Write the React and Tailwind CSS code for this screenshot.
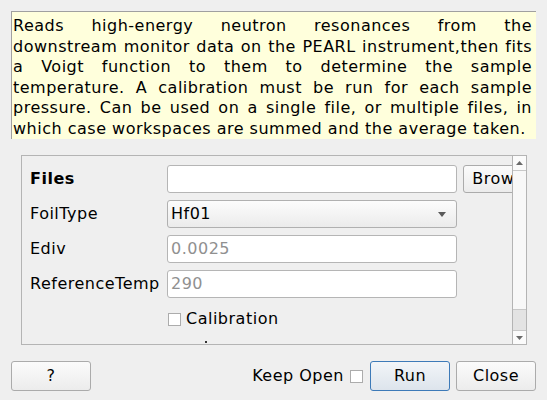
export default function App() {
  const input = "h-[28px] w-[290px] shrink-0 bg-white border border-[#b5b5b5] rounded-[3px] flex items-center pl-[3px]";
  return (
    <div className="w-[547px] h-[400px] bg-[#efefef] flex flex-col font-['DejaVu_Sans',sans-serif] text-[16px] tracking-[0.5px] text-black overflow-hidden">
      <div className="mx-[11px] mt-[11px] h-[128px] shrink-0 bg-[#ffffdc] border-t border-l border-[#a0a0a0] pl-[1px] pr-[4px] pt-[4px] text-justify leading-[20.6px]">
        Reads high-energy neutron resonances from the downstream monitor data on the PEARL instrument,then fits a Voigt function to them to determine the sample temperature. A calibration must be run for each sample pressure. Can be used on a single file, or multiple files, in which case workspaces are summed and the average taken.
      </div>

      <div className="ml-[21px] mt-[16px] w-[506px] h-[190px] shrink-0 border border-[#b4b4b4] flex">
        <div className="flex-1 overflow-hidden pl-[8px] pt-[9px] flex flex-col gap-[7px]">
          <div className="flex items-center h-[28px] shrink-0">
            <div className="w-[137px] shrink-0 font-bold">Files</div>
            <div className={input}></div>
            <div className="ml-[6px] h-[28px] w-[80px] shrink-0 border border-[#ababab] rounded-[3px] bg-gradient-to-b from-[#fbfbfb] to-[#ececec] flex items-center justify-center">
              Browse
            </div>
          </div>
          <div className="flex items-center h-[28px] shrink-0">
            <div className="w-[137px] shrink-0">FoilType</div>
            <div className="h-[28px] w-[290px] shrink-0 border border-[#b0b0b0] rounded-[3px] bg-gradient-to-b from-[#fcfcfc] to-[#ebebeb] flex items-center pl-[3px] pr-[10px]">
              <span className="flex-1">Hf01</span>
              <svg width="8" height="5" viewBox="0 0 8 5"><path d="M0 0H8L4 5Z" fill="#5a5a5a" /></svg>
            </div>
          </div>
          <div className="flex items-center h-[28px] shrink-0">
            <div className="w-[137px] shrink-0">Ediv</div>
            <div className={input}><span className="text-[#909090]">0.0025</span></div>
          </div>
          <div className="flex items-center h-[28px] shrink-0">
            <div className="w-[137px] shrink-0">ReferenceTemp</div>
            <div className={input}><span className="text-[#909090]">290</span></div>
          </div>
          <div className="flex items-center h-[28px] shrink-0">
            <div className="w-[138px] shrink-0"></div>
            <div className="w-[13px] h-[13px] shrink-0 bg-white border border-[#acacac]"></div>
            <span className="ml-[5px]">Calibration</span>
          </div>
          <div className="flex h-[28px] shrink-0">
            <div className="ml-[175px] mt-[1px] w-[2px] h-[2px] bg-[#333]"></div>
          </div>
        </div>
        <div className="w-[14px] shrink-0 border-l border-[#b4b4b4] bg-[#f8f8f8] flex flex-col">
          <div className="h-[15px] border-b border-[#c8c8c8] bg-[#fbfbfb] flex items-center justify-center">
            <svg width="7" height="4" viewBox="0 0 7 4"><path d="M3.5 0L7 4H0Z" fill="#6a6a6a" /></svg>
          </div>
          <div className="flex-1"></div>
          <div className="h-[22px] bg-[#e3e3e3] border-y border-[#c8c8c8]"></div>
          <div className="h-[13px] bg-[#fbfbfb] flex items-center justify-center">
            <svg width="7" height="4" viewBox="0 0 7 4"><path d="M0 0H7L3.5 4Z" fill="#6a6a6a" /></svg>
          </div>
        </div>
      </div>

      <div className="mt-[16px] px-[11px] flex items-center h-[30px] shrink-0">
        <div className="h-[30px] w-[80px] border border-[#ababab] rounded-[3px] bg-gradient-to-b from-[#fbfbfb] to-[#ececec] flex items-center justify-center">?</div>
        <div className="flex-1"></div>
        <span>Keep Open</span>
        <div className="ml-[6px] w-[13px] h-[13px] bg-white border border-[#acacac]"></div>
        <div className="ml-[7px] h-[30px] w-[80px] border border-[#3d7ab8] rounded-[3px] bg-gradient-to-b from-[#f2f5f8] to-[#dde4ec] flex items-center justify-center">Run</div>
        <div className="ml-[6px] h-[30px] w-[80px] border border-[#ababab] rounded-[3px] bg-gradient-to-b from-[#fbfbfb] to-[#ececec] flex items-center justify-center">Close</div>
      </div>
    </div>
  );
}
